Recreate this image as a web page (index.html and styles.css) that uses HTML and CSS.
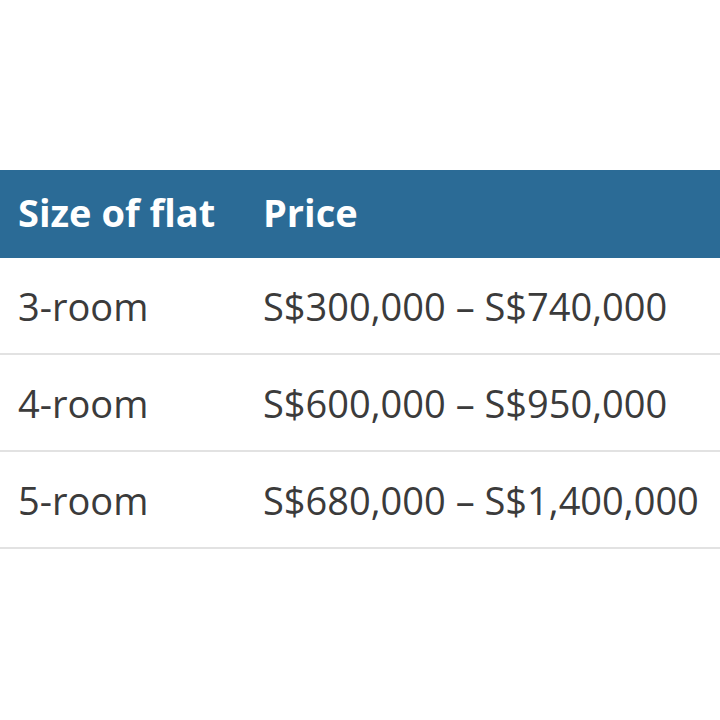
FILE: index.html
```html
<!DOCTYPE html>
<html>
<head>
<meta charset="utf-8">
<link rel="stylesheet" href="styles.css">
</head>
<body>
<div class="page">
  <div class="table">
    <div class="row head">
      <div class="cell c1">Size of flat</div>
      <div class="cell c2">Price</div>
    </div>
    <div class="row">
      <div class="cell c1">3-room</div>
      <div class="cell c2">S$300,000 – S$740,000</div>
    </div>
    <div class="row">
      <div class="cell c1">4-room</div>
      <div class="cell c2">S$600,000 – S$950,000</div>
    </div>
    <div class="row">
      <div class="cell c1">5-room</div>
      <div class="cell c2">S$680,000 – S$1,400,000</div>
    </div>
  </div>
</div>
</body>
</html>
```
FILE: styles.css
```css
html, body {
  margin: 0;
  padding: 0;
  background: #ffffff;
}
.page {
  width: 720px;
  height: 720px;
  padding-top: 170px;
  box-sizing: border-box;
  overflow: hidden;
  font-family: "Open Sans", "DejaVu Sans", sans-serif;
}
.table {
  display: flex;
  flex-direction: column;
}
.row {
  display: grid;
  grid-template-columns: 263px 1fr;
  align-items: center;
  height: 95px;
  border-bottom: 2px solid #e2e2e2;
  font-size: 38px;
  color: #3b3b3b;
  white-space: nowrap;
}
.row.head {
  height: 88px;
  padding-bottom: 4px;
  box-sizing: border-box;
  border-bottom: none;
  background: #2b6b96;
  color: #ffffff;
  font-weight: 700;
  font-size: 38px;
}
.cell.c1 {
  padding-left: 18px;
}
.cell.c2 {
  padding-left: 0;
}
```
